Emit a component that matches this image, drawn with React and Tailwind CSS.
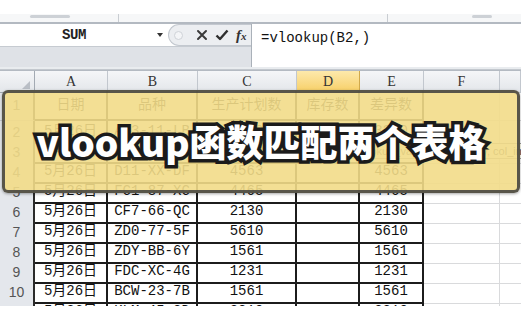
import React from 'react'

const grid = 'grid grid-cols-[35px_73px_90px_99px_63px_64px_76px_1fr]'

const rows = [
  ['日期', '品种', '生产计划数', '库存数', '差异数'],
  ['5月26日', 'AC3-11-LB', '3200', '', '3200'],
  ['5月26日', 'KD2-56-TR', '2840', '', '2840'],
  ['5月26日', 'D11-XX-DF', '4563', '', '4563'],
  ['5月26日', 'FC1-87-XC', '4465', '', '4465'],
  ['5月26日', 'CF7-66-QC', '2130', '', '2130'],
  ['5月26日', 'ZD0-77-5F', '5610', '', '5610'],
  ['5月26日', 'ZDY-BB-6Y', '1561', '', '1561'],
  ['5月26日', 'FDC-XC-4G', '1231', '', '1231'],
  ['5月26日', 'BCW-23-7B', '1561', '', '1561'],
  ['5月26日', 'KLM-45-2D', '2210', '', '2210'],
]

const cols = ['A', 'B', 'C', 'D', 'E', 'F', '']

function FormulaBar() {
  return (
    <div className="flex h-[43px]">
      <div className="flex w-[251px] flex-col bg-[#dfe2e7]">
        <div className="flex h-[23px] items-center border-b border-[#c6cbd1] bg-white">
          <div className="flex w-[168px] items-center">
            <span className="ml-[62px] font-['Liberation_Mono',monospace] text-[14px] font-bold tracking-tight text-[#222]">SUM</span>
            <span className="ml-auto mr-[5px] h-0 w-0 border-x-[3px] border-t-[4px] border-x-transparent border-t-[#333]" />
          </div>
          <div className="flex h-[22px] flex-1 items-center gap-[7px] rounded-l-full border border-r-0 border-[#c3c8cf] bg-[#eceef1] pl-[5px]">
            <span className="h-[9px] w-[9px] rounded-full border border-[#cfd3d8] bg-[#f4f5f7]" />
            <svg width="12" height="12" viewBox="0 0 12 12" className="ml-[6px]">
              <path d="M2 2 L10 10 M10 2 L2 10" stroke="#3a3a3a" strokeWidth="2" strokeLinecap="round" />
            </svg>
            <svg width="14" height="12" viewBox="0 0 14 12">
              <path d="M1.5 6.5 L5 10 L12.5 1.5" stroke="#2f2f2f" strokeWidth="2.4" fill="none" strokeLinejoin="round" />
            </svg>
            <span className="font-['Liberation_Serif',serif] text-[15px] font-bold italic leading-none text-[#333]">
              f<span className="text-[11px]">x</span>
            </span>
          </div>
        </div>
      </div>
      <div className="flex-1 border-l border-[#aab1b9] bg-white pl-[9px] pt-[4px] font-['Liberation_Mono',monospace] text-[14px] text-[#111]">
        =vlookup(B2,)
      </div>
    </div>
  )
}

function HeaderRow() {
  return (
    <div className={`${grid} h-[21px] border-t border-[#b4bac2] font-['Liberation_Serif',serif] text-[14px] text-[#333]`}>
      <div className="relative border-b border-r border-[#a3aab3] bg-gradient-to-b from-[#f5f6f8] to-[#e3e6ea]">
        <span className="absolute bottom-[3px] right-[4px] h-0 w-0 border-b-[8px] border-l-[8px] border-b-[#b9bec5] border-l-transparent" />
      </div>
      {cols.map((c, i) =>
        c === 'D' ? (
          <div key={i} className="flex items-center justify-center border-b border-r border-[#d1a94a] bg-gradient-to-b from-[#fde9ab] to-[#f7cf64]">
            {c}
          </div>
        ) : (
          <div key={i} className="flex items-center justify-center border-b border-r border-[#c2c7ce] bg-gradient-to-b from-[#f5f6f8] to-[#e3e6ea]">
            {c}
          </div>
        )
      )}
    </div>
  )
}

function DataRow({ cells, n }) {
  const tall = n === 1
  return (
    <div className={tall ? `${grid} h-[30px]` : `${grid} h-[20px]`}>
      <div className="flex items-center justify-center border-b border-r-2 border-b-[#c5c9d0] border-r-[#2b2b2b] bg-[#e4e7ec] font-['Liberation_Sans',sans-serif] text-[14px] text-[#555]">
        {n}
      </div>
      {cells.map((v, j) => (
        <div
          key={j}
          className="flex items-center justify-center whitespace-nowrap border-b-2 border-r-2 border-[#1c1c1c] font-['Liberation_Mono','Noto_Sans_CJK_SC',monospace] text-[14px] text-[#111]"
        >
          {v}
        </div>
      ))}
      <div className="border-b border-r border-[#d9dadc]" />
      <div className="border-b border-[#d9dadc]" />
    </div>
  )
}

export default function App() {
  return (
    <div className="relative h-[323px] w-[521px] overflow-hidden bg-white">
      {/* ribbon remnant, cut off by the screenshot */}
      <div className="h-[14px] bg-white" />
      <div className="flex h-[10px] items-start border-b-2 border-[#b3b9c1] bg-[#f6f7f8]">
        <span className="ml-[30px] mt-[1px] h-[3px] w-[40px] rounded-sm bg-[#cdd1d6]" />
        <span className="ml-[48px] h-[8px] border-r border-[#c9cdd2]" />
        <span className="ml-[268px] h-[8px] border-r border-[#c9cdd2]" />
        <span className="ml-[84px] mt-[1px] h-[3px] w-[20px] rounded-sm bg-[#cdd1d6]" />
      </div>

      <FormulaBar />
      <div className="h-[3px] border-b border-[#c3c8ce] bg-[#e9ecef]" />

      <HeaderRow />
      {rows.map((r, i) => (
        <DataRow key={i} cells={r} n={i + 1} />
      ))}

      {/* function tooltip under the active cell */}
      <div className="absolute left-[300px] top-[143px] whitespace-nowrap border border-[#9a9a9a] bg-[#fffff0] px-[4px] font-['Liberation_Sans',sans-serif] text-[11px] leading-[14px] text-[#444]">
        VLOOKUP(lookup_value, table_array, col_index_num, [range_lookup])
      </div>

      {/* title banner */}
      <div className="absolute left-[2px] top-[90px] flex h-[103px] w-[518px] items-center justify-center rounded-[6px] border-[3px] border-[#3d3d3d]/85 bg-[#f2dc88]/[0.9] shadow-[0_1px_3px_rgba(0,0,0,0.35)]">
        <span className="font-['Noto_Sans_CJK_SC',sans-serif] text-[37px] font-black leading-none text-white [-webkit-text-stroke:7px_#1b1b1b] [paint-order:stroke_fill]">
          vlookup函数匹配两个表格
        </span>
      </div>

      {/* faded bottom of the screenshot */}
      <div className="absolute bottom-0 left-0 right-0 top-[306px] bg-white" />
    </div>
  )
}
